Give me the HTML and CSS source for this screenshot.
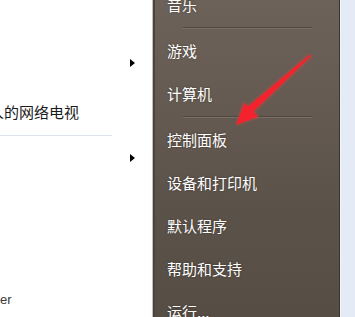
FILE: index.html
```html
<!DOCTYPE html>
<html lang="zh-CN">
<head>
<meta charset="utf-8">
<title>开始菜单</title>
<link rel="stylesheet" href="styles.css">
</head>
<body>
<div class="menu">
  <div class="left">
    <div class="row arrow-row first"><span class="tri"></span></div>
    <div class="row text-row"><span class="cut">人的网络电视</span></div>
    <div class="lsep"></div>
    <div class="row arrow-row second"><span class="tri"></span></div>
    <div class="row latin-row">er</div>
  </div>
  <div class="right">
    <ul class="items">
      <li class="item">音乐</li>
      <li class="sep"></li>
      <li class="item">游戏</li>
      <li class="item">计算机</li>
      <li class="sep"></li>
      <li class="item">控制面板</li>
      <li class="item">设备和打印机</li>
      <li class="item">默认程序</li>
      <li class="item">帮助和支持</li>
      <li class="item">运行...</li>
    </ul>
  </div>
  <div class="edge"></div>
</div>
<svg class="red-arrow" width="355" height="317" viewBox="0 0 355 317">
  <defs>
    <filter id="glow" x="-20%" y="-20%" width="140%" height="140%">
      <feGaussianBlur stdDeviation="1.6"/>
    </filter>
  </defs>
  <g fill="#ff3b3b" opacity="0.55" filter="url(#glow)">
    <polygon points="310,54 311.5,56.5 253,113 247,107"/>
    <polygon points="236,125 244,102 259,117"/>
  </g>
  <g fill="#f4222c">
    <polygon points="310,54.5 311,56 252.5,112 247.5,107"/>
    <polygon points="236,125 244.5,103 258,116.5"/>
  </g>
</svg>
</body>
</html>
```

FILE: styles.css
```css
html, body {
  margin: 0;
  padding: 0;
}
body {
  width: 355px;
  height: 317px;
  overflow: hidden;
  position: relative;
  background: #ffffff;
}
.menu {
  display: flex;
  height: 317px;
}
.left {
  width: 152px;
  flex: none;
  background: #ffffff;
  display: flex;
  flex-direction: column;
  font-family: "Noto Sans CJK SC", "Noto Sans", sans-serif;
  color: #1a1a1a;
  overflow: hidden;
}
.row {
  display: flex;
  align-items: center;
}
.arrow-row {
  height: 24px;
  justify-content: flex-end;
  padding-right: 17px;
}
.arrow-row.first {
  margin-top: 51px;
}
.arrow-row.second {
  margin-top: 10px;
}
.tri {
  width: 0;
  height: 0;
  border-top: 4px solid transparent;
  border-bottom: 4px solid transparent;
  border-left: 5px solid #000000;
}
.text-row {
  height: 24px;
  margin-top: 24px;
  font-size: 15px;
  white-space: nowrap;
}
.cut {
  margin-left: -11px;
}
.lsep {
  margin-top: 12px;
  width: 112px;
  height: 1px;
  background: #dde3ea;
}
.latin-row {
  height: 20px;
  margin-top: 119px;
  font-family: "Liberation Sans", Arial, sans-serif;
  font-size: 13px;
  color: #3a3a3a;
}
.right {
  width: 186px;
  flex: none;
  border-left: 1px solid #c4bfba;
  border-right: 1px solid #3a332e;
  box-shadow: inset 2px 0 0 #4b433c;
  background: linear-gradient(180deg, #6c6259 0%, #645a51 35%, #5b524a 65%, #564d45 100%);
  overflow: hidden;
}
.items {
  list-style: none;
  margin: -17px 0 0 0;
  padding: 0;
  font-family: "Noto Sans CJK SC", "Noto Sans", sans-serif;
  font-size: 15px;
  color: #ffffff;
}
.item {
  height: 43px;
  display: flex;
  align-items: center;
  padding-left: 14px;
  text-shadow: 0 0 2px rgba(40, 30, 25, 0.6);
  white-space: nowrap;
}
.sep {
  height: 3px;
  display: flex;
  align-items: center;
  padding-left: 30px;
}
.sep::before {
  content: "";
  display: block;
  width: 129px;
  height: 1px;
  background: #4f4740;
  box-shadow: 0 1px 0 #786e65;
}
.edge {
  flex: 1;
  border-left: 1px solid #f3f5f9;
  background: #e4ebf7;
}
.red-arrow {
  position: absolute;
  left: 0;
  top: 0;
  pointer-events: none;
}
```
